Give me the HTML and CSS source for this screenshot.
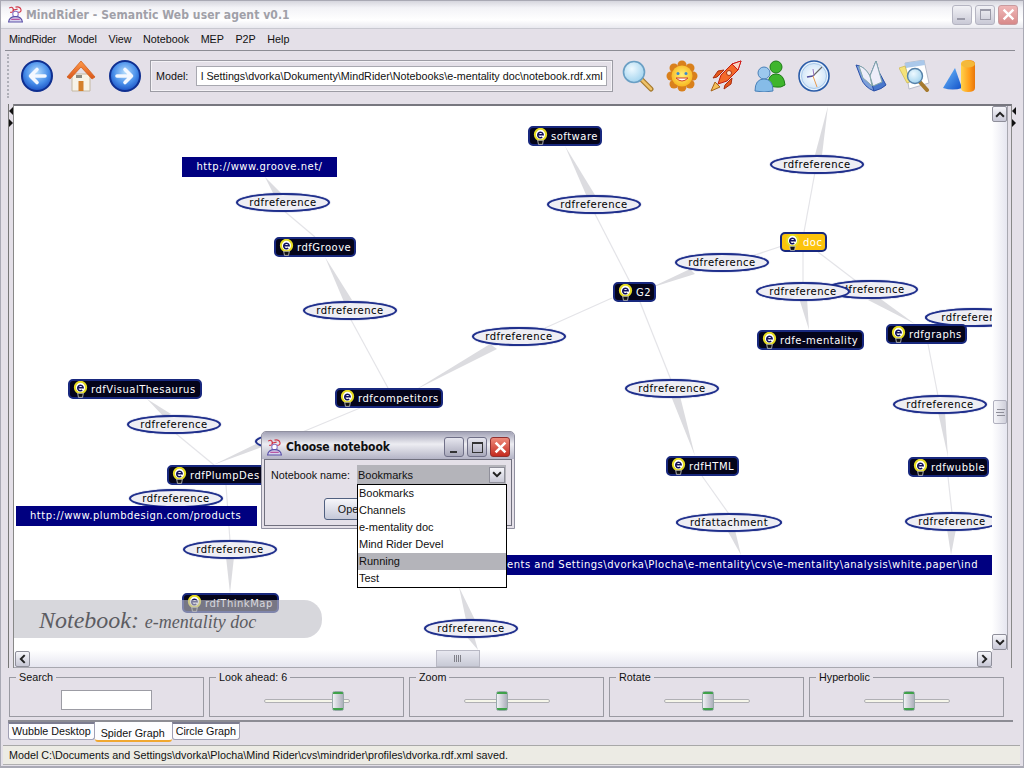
FILE: index.html
```html
<!DOCTYPE html>
<html lang="en">
<head>
<meta charset="utf-8">
<title>MindRider</title>
<link rel="stylesheet" href="styles.css">
</head>
<body>
<svg class="defs" width="0" height="0">
  <defs>
    <radialGradient id="gBlue" cx="50%" cy="38%" r="62%"><stop offset="0" stop-color="#b4dcfc"/><stop offset=".6" stop-color="#4a90ea"/><stop offset="1" stop-color="#1b52c4"/></radialGradient>
    <linearGradient id="gRoof" x1="0" y1="0" x2="0" y2="1"><stop offset="0" stop-color="#ff9a4a"/><stop offset="1" stop-color="#d9551a"/></linearGradient>
    <radialGradient id="gGlass" cx="40%" cy="35%" r="70%"><stop offset="0" stop-color="#eef9ff"/><stop offset="1" stop-color="#9fd2ee"/></radialGradient>
    <radialGradient id="gSun" cx="50%" cy="45%" r="55%"><stop offset="0" stop-color="#fff27a"/><stop offset="1" stop-color="#f8b720"/></radialGradient>
    <radialGradient id="gFace" cx="50%" cy="50%" r="55%"><stop offset="0" stop-color="#fff"/><stop offset="1" stop-color="#cfe4f8"/></radialGradient>
    <linearGradient id="gCyl" x1="0" y1="0" x2="1" y2="0"><stop offset="0" stop-color="#ffd24a"/><stop offset=".6" stop-color="#ff9d1a"/><stop offset="1" stop-color="#e8760a"/></linearGradient>
    <linearGradient id="gCone" x1="0" y1="0" x2="1" y2="1"><stop offset="0" stop-color="#6fc0ff"/><stop offset="1" stop-color="#1250c8"/></linearGradient>
    <linearGradient id="gThumb" x1="0" y1="0" x2="1" y2="0"><stop offset="0" stop-color="#f4f4f8"/><stop offset="1" stop-color="#a9acb8"/></linearGradient>
    <symbol id="bulb" viewBox="0 0 16 18">
      <circle cx="8" cy="6.800" r="6" fill="#fff" stroke="#e6dc22" stroke-width="2.200"/>
      <path d="M5 7h5.800a2.900 2.900 0 1 0-1 2.700" fill="none" stroke="#10105c" stroke-width="1.600"/>
      <path d="M5 13h6l-.8 4.400H5.800z" fill="#111" stroke="#d8d8d8" stroke-width=".8"/>
    </symbol>
    <symbol id="appicon" viewBox="0 0 16 16">
      <path d="M2 2q3-2 4 1t-3 3M8 1q4-1 5 2t-3 3M5 4l5-1" fill="none" stroke="#d23a4a" stroke-width="1.100"/>
      <circle cx="8" cy="7.500" r="2.600" fill="#fff" stroke="#8a78c8"/>
      <path d="M1.500 15c.5-4 3.500-5 6.500-5s6 1 6.500 5z" fill="#d8d4ee" stroke="#5a50a8"/>
      <path d="M4 12.500h8" stroke="#b03a90"/>
    </symbol>
    <symbol id="arrow-up" viewBox="0 0 9 6"><path d="M1 5l3.500-3.500L8 5" fill="none" stroke="#222" stroke-width="1.800"/></symbol>
    <symbol id="arrow-down" viewBox="0 0 9 6"><path d="M1 1l3.500 3.500L8 1" fill="none" stroke="#222" stroke-width="1.800"/></symbol>
    <symbol id="arrow-left" viewBox="0 0 6 9"><path d="M5 1L1.500 4.500 5 8" fill="none" stroke="#222" stroke-width="1.800"/></symbol>
    <symbol id="arrow-right" viewBox="0 0 6 9"><path d="M1 1l3.500 3.500L1 8" fill="none" stroke="#222" stroke-width="1.800"/></symbol>
    <symbol id="thumb" viewBox="0 0 12 20">
      <rect x=".5" y=".5" width="11" height="19" rx="2" fill="url(#gThumb)" stroke="#9aa"/>
      <path d="M1 3V2q0-1 1-1h8q1 0 1 1v1zM1 17v1q0 1 1 1h8q1 0 1-1v-1z" fill="#3fa24a"/>
    </symbol>
  </defs>
</svg>

<div class="window">
  <header class="titlebar">
    <svg class="title-icon"><use href="#appicon"/></svg>
    <span class="title-text">MindRider - Semantic Web user agent v0.1</span>
    <div class="win-buttons">
      <span class="wbtn"><i class="g-min"></i></span>
      <span class="wbtn"><i class="g-max"></i></span>
      <span class="wbtn wbtn-close"><svg viewBox="0 0 12 12" class="g-x"><path d="M1.500 1.500l9 9M10.500 1.500l-9 9" stroke="#fff" stroke-width="2.200"/></svg></span>
    </div>
  </header>

  <nav class="menubar">
    <span class="menu-first">MindRider</span><span>Model</span><span>View</span><span>Notebook</span><span>MEP</span><span>P2P</span><span>Help</span>
  </nav>

  <div class="toolbar">
    <div class="grip"></div>
    <div class="tools">
      <svg class="tool" viewBox="0 0 32 32"><circle cx="16" cy="16" r="15" fill="url(#gBlue)" stroke="#0f2f90" stroke-width="2"/><path d="M24 16H10M16 9.500L9.500 16l6.500 6.500" fill="none" stroke="#f4f8ff" stroke-width="3.600" stroke-linecap="round" stroke-linejoin="round"/></svg>
      <svg class="tool" viewBox="0 0 32 32"><path d="M7 14h18v17H7z" fill="#f7f3e8" stroke="#c4b8a2"/><path d="M13.500 21h5v10h-5z" fill="#d4802c"/><path d="M11 15h6v3h-6z" fill="#8a8a80"/><path d="M16 1L2 17l3 2L16 7l11 12 3-2z" fill="url(#gRoof)" stroke="#d0601c" stroke-width=".8"/></svg>
      <svg class="tool" viewBox="0 0 32 32"><circle cx="16" cy="16" r="15" fill="url(#gBlue)" stroke="#0f2f90" stroke-width="2"/><path d="M8 16h14M16 9.500l6.500 6.500-6.500 6.500" fill="none" stroke="#f4f8ff" stroke-width="3.600" stroke-linecap="round" stroke-linejoin="round"/></svg>
    </div>
    <div class="model-box">
      <label class="model-label">Model:</label>
      <div class="model-input">l Settings\dvorka\Dokumenty\MindRider\Notebooks\e-mentality doc\notebook.rdf.xml</div>
    </div>
    <div class="tools tools-a">
      <svg class="tool" viewBox="0 0 32 32"><path d="M19 19l10 10" stroke="#a67a2e" stroke-width="5" stroke-linecap="round"/><path d="M19 19l10 10" stroke="#eec268" stroke-width="2.500" stroke-linecap="round"/><circle cx="12" cy="12" r="10.500" fill="url(#gGlass)" stroke="#6a9fc4" stroke-width="1.600"/></svg>
      <svg class="tool" viewBox="0 0 32 32"><g fill="#d9801c"><circle cx="16" cy="5" r="4.500"/><circle cx="16" cy="27" r="4.500"/><circle cx="5" cy="16" r="4.500"/><circle cx="27" cy="16" r="4.500"/><circle cx="8" cy="8" r="4.500"/><circle cx="24" cy="8" r="4.500"/><circle cx="8" cy="24" r="4.500"/><circle cx="24" cy="24" r="4.500"/></g><circle cx="16" cy="16" r="10.500" fill="url(#gSun)"/><circle cx="12" cy="13.500" r="1.500" fill="#3a8ad0"/><circle cx="20" cy="13.500" r="1.500" fill="#3a8ad0"/><path d="M10 18q6 6 12 0z" fill="#fff" stroke="#d2432a"/></svg>
      <svg class="tool" viewBox="0 0 32 32"><path d="M1 31l4-9 5 5z" fill="#f3c05a" stroke="#a8641a"/><path d="M7 17l-4 1 5-7 6-1zM15 25l-1 4 7-5 1-6z" fill="#e65a1e" stroke="#a82c10"/><path d="M8 24L11 15 22 4 31 1 28 10 17 21z" fill="#f36a2a" stroke="#c01e10"/><path d="M22 4l9-3-3 9z" fill="#f8d6c4" stroke="#d01818"/><circle cx="19" cy="13" r="2.500" fill="#ffe2cc" stroke="#a83010"/></svg>
      <svg class="tool" viewBox="0 0 32 32"><circle cx="22" cy="7" r="6" fill="#3eb52c" stroke="#1e7c18"/><path d="M14 25q0-11 8-11t9 11q-4 3-9 2-5 0-8-2z" fill="#3eb52c" stroke="#1e7c18"/><circle cx="10" cy="13" r="6" fill="#9cc8ee" stroke="#4a80b8"/><path d="M1 31q0-12 9-12t9 12q-9 2-18 0z" fill="#86bce8" stroke="#4a80b8"/></svg>
      <svg class="tool" viewBox="0 0 32 32"><circle cx="16" cy="16" r="15" fill="#e6f1fb" stroke="#2a5ca8" stroke-width="1.600"/><circle cx="16" cy="16" r="12.500" fill="url(#gFace)" stroke="#a8c8ea"/><path d="M15 16L24 7" stroke="#666" stroke-width="1.100"/><path d="M15 16L9 17" stroke="#5050a0" stroke-width="1.500"/><path d="M15 9l1 7" stroke="#9878c0"/><path d="M15 16l4 11" stroke="#e89a50"/></svg>
    </div>
    <div class="tools tools-b">
      <svg class="tool" viewBox="0 0 32 32"><path d="M1 5q8 1 14 11l4 15Q9 27 6 18z" fill="#7d9fdb" stroke="#2a50a8"/><path d="M15 16L19 31Q27 29 31 25L24 12 21 1z" fill="#4a78cc" stroke="#2a50a8"/><path d="M4 6q6 1 11 10l2 10q-5-5-9-8zM15 16l6-15 6 21-9 4z" fill="#eeeefa" stroke="#8aa"/></svg>
      <svg class="tool" viewBox="0 0 32 32"><path d="M6 3l19-3 5 23-20 6z" fill="#fff" stroke="#b8bcc8"/><path d="M6 3l19-3 1 5-19 3z" fill="#aac8ea"/><path d="M0 8l6-2 5 16-3 1z" fill="#f5e27a" stroke="#c8b040" stroke-width=".6"/><path d="M20 21l8 9" stroke="#a67a2e" stroke-width="4" stroke-linecap="round"/><circle cx="16" cy="16" r="7.500" fill="url(#gGlass)" stroke="#5580a8" stroke-width="1.400"/></svg>
      <svg class="tool" viewBox="0 0 32 32"><path d="M0 28L12 8l7 20q-9 3-19 0z" fill="url(#gCone)"/><path d="M18 4q0-4 7-4t7 4v24q0 4-7 4t-7-4z" fill="url(#gCyl)"/><ellipse cx="25" cy="4" rx="7" ry="3.500" fill="#f4b93a"/></svg>
    </div>
  </div>

  <main class="workspace">
    <div class="splitter"><i class="tri-l"></i><i class="tri-r"></i></div>
    <div class="scrollpane">
      <div class="view-row">
        <div class="canvas">
          <svg class="edges" viewBox="14 106 978 544">
            <g class="wedge">
              <polygon points="828,106 815,155 822,155"/>
              <polygon points="799,298 807,298 809,330"/>
              <polygon points="878,297 868,300 915,324"/>
              <polygon points="938,412 945,412 948,457"/>
              <polygon points="947,529 956,529 951,555"/>
              <polygon points="690,269 695,274 650,288"/>
              <polygon points="490,344 497,349 415,390"/>
              <polygon points="565,146 587,197 595,195"/>
              <polygon points="671,396 680,396 695,456"/>
              <polygon points="727,530 735,530 741,555"/>
              <polygon points="265,177 274,195 281,193"/>
              <polygon points="325,257 344,302 352,300"/>
              <polygon points="147,399 164,417 171,414"/>
              <polygon points="226,557 234,557 230,593"/>
              <polygon points="459,587 466,620 475,620"/>
              <polygon points="466,636 474,636 478,650"/>
              <polygon points="213,465 260,442 262,447"/>
            </g>
            <g class="thin">
              <line x1="815" y1="172" x2="804" y2="232"/>
              <line x1="803" y1="252" x2="803" y2="283"/>
              <line x1="818" y1="252" x2="856" y2="281"/>
              <line x1="928" y1="344" x2="938" y2="396"/>
              <line x1="948" y1="477" x2="952" y2="513"/>
              <line x1="782" y1="246" x2="752" y2="256"/>
              <line x1="612" y1="298" x2="545" y2="328"/>
              <line x1="594" y1="212" x2="630" y2="282"/>
              <line x1="640" y1="302" x2="671" y2="380"/>
              <line x1="702" y1="476" x2="729" y2="514"/>
              <line x1="283" y1="210" x2="315" y2="237"/>
              <line x1="350" y1="318" x2="388" y2="388"/>
              <line x1="174" y1="432" x2="214" y2="465"/>
              <line x1="226" y1="485" x2="230" y2="541"/>
              <line x1="360" y1="408" x2="300" y2="433"/>
            </g>
          </svg>

          <div class="ell e1">rdfreference</div>
          <div class="ell e2">rdfreference</div>
          <div class="ell e3">rdfreference</div>
          <div class="ell e4">rdfreference</div>
          <div class="ell e5">rdfreference</div>
          <div class="ell e6">rdfreference</div>
          <div class="ell e7">rdfreference</div>
          <div class="ell e8">rdfreference</div>
          <div class="ell e9">rdfreference</div>
          <div class="ell e10">rdfreference</div>
          <div class="ell e11">rdfreference</div>
          <div class="ell e12">rdfreference</div>
          <div class="ell e13">rdfreference</div>
          <div class="ell e14">rdfreference</div>
          <div class="ell e15">rdfreference</div>
          <div class="ell e16">rdfreference</div>
          <div class="ell e17">rdfreference</div>
          <div class="ell e18">rdfattachment</div>

          <div class="node n1"><svg class="bulb"><use href="#bulb"/></svg>software</div>
          <div class="node n2"><svg class="bulb"><use href="#bulb"/></svg>rdfGroove</div>
          <div class="node n3"><svg class="bulb"><use href="#bulb"/></svg>G2</div>
          <div class="node node-hot n4"><svg class="bulb"><use href="#bulb"/></svg>doc</div>
          <div class="node n5"><svg class="bulb"><use href="#bulb"/></svg>rdfe-mentality</div>
          <div class="node n6"><svg class="bulb"><use href="#bulb"/></svg>rdfgraphs</div>
          <div class="node n7"><svg class="bulb"><use href="#bulb"/></svg>rdfcompetitors</div>
          <div class="node n8"><svg class="bulb"><use href="#bulb"/></svg>rdfVisualThesaurus</div>
          <div class="node n9"><svg class="bulb"><use href="#bulb"/></svg>rdfPlumpDes</div>
          <div class="node n10"><svg class="bulb"><use href="#bulb"/></svg>rdfHTML</div>
          <div class="node n11"><svg class="bulb"><use href="#bulb"/></svg>rdfwubble</div>
          <div class="node n12"><svg class="bulb"><use href="#bulb"/></svg>rdfThinkMap</div>

          <div class="url u1">http://www.groove.net/</div>
          <div class="url u2">http://www.plumbdesign.com/products</div>
          <div class="url u3">ents and Settings\dvorka\Plocha\e-mentality\cvs\e-mentality\analysis\white.paper\ind</div>

          <div class="watermark"><span class="wm-big">Notebook:</span> <span class="wm-small">e-mentality doc</span></div>

          <div class="dialog">
            <div class="dlg-title">
              <svg class="dlg-icon"><use href="#appicon"/></svg>
              <span class="dlg-text">Choose notebook</span>
              <span class="dbtn"><i class="g-min g-min-d"></i></span>
              <span class="dbtn"><i class="g-max g-max-d"></i></span>
              <span class="dbtn dbtn-close"><svg viewBox="0 0 12 12" class="g-x"><path d="M1.500 1.500l9 9M10.500 1.500l-9 9" stroke="#fff" stroke-width="2.400"/></svg></span>
            </div>
            <div class="dlg-body">
              <div class="dlg-row">
                <span class="dlg-label">Notebook name:</span>
                <div class="combo"><span>Bookmarks</span><span class="combo-btn"><svg class="ar-v"><use href="#arrow-down"/></svg></span></div>
              </div>
              <button class="open-btn" type="button">Open</button>
            </div>
          </div>

          <ul class="popup">
            <li>Bookmarks</li>
            <li>Channels</li>
            <li>e-mentality doc</li>
            <li>Mind Rider Devel</li>
            <li class="sel">Running</li>
            <li>Test</li>
          </ul>
        </div>
        <div class="vscroll">
          <span class="sbtn"><svg class="ar-v"><use href="#arrow-up"/></svg></span>
          <div class="vtrack"><span class="vthumb"></span></div>
          <span class="sbtn"><svg class="ar-v"><use href="#arrow-down"/></svg></span>
        </div>
      </div>
      <div class="hscroll">
        <span class="sbtn"><svg class="ar-h"><use href="#arrow-left"/></svg></span>
        <div class="htrack"><span class="hthumb"></span></div>
        <span class="sbtn"><svg class="ar-h"><use href="#arrow-right"/></svg></span>
      </div>
    </div>
    <div class="splitter splitter-r"><i class="tri-l"></i><i class="tri-r"></i></div>
  </main>

  <section class="controls">
    <fieldset class="group"><legend>Search</legend><div class="search-box"></div></fieldset>
    <fieldset class="group"><legend>Look ahead: 6</legend><div class="slider s-look"><svg class="sthumb"><use href="#thumb"/></svg></div></fieldset>
    <fieldset class="group"><legend>Zoom</legend><div class="slider s-zoom"><svg class="sthumb"><use href="#thumb"/></svg></div></fieldset>
    <fieldset class="group"><legend>Rotate</legend><div class="slider s-rot"><svg class="sthumb"><use href="#thumb"/></svg></div></fieldset>
    <fieldset class="group"><legend>Hyperbolic</legend><div class="slider s-hyp"><svg class="sthumb"><use href="#thumb"/></svg></div></fieldset>
  </section>

  <div class="tabs">
    <span class="tab">Wubble Desktop</span>
    <span class="tab tab-active">Spider Graph</span>
    <span class="tab">Circle Graph</span>
  </div>

  <footer class="status">Model C:\Documents and Settings\dvorka\Plocha\Mind Rider\cvs\mindrider\profiles\dvorka.rdf.xml saved.</footer>
</div>
</body>
</html>
```
FILE: styles.css
```css
* { box-sizing: border-box; }
html, body { margin: 0; height: 100%; overflow: hidden; }
body { background: #fff; font: 10.75px "Liberation Sans", Arial, sans-serif; color: #111; }
.defs { position: absolute; }

.window {
  width: 1024px; height: 768px; display: flex; flex-direction: column;
  background: #e4e0e8; border: 1px solid #a9a9b4; border-width: 1px 1px 2px 1px;
  padding: 0 2px;
}

/* Title bar */
.titlebar {
  height: 28px; flex: none; display: flex; align-items: center; padding-left: 3px; margin: 0 -2px;
  background: linear-gradient(#d6d6de 0, #f3f3f7 25%, #fff 70%, #e9e9ef 100%);
  border-bottom: 1px solid #c8c8d0;
}
.title-icon { width: 17px; height: 17px; margin: 0 2px 0 3px; }
.title-text { font: bold 12px "DejaVu Sans", sans-serif; font-stretch: condensed; letter-spacing: .08px; color: #a0a0a8; flex: 1; }
.win-buttons { display: flex; gap: 3px; margin-right: 5px; }
.wbtn {
  width: 20px; height: 20px; border: 1px solid #b5b5c2; border-radius: 3px; display: flex; align-items: center; justify-content: center;
  background: linear-gradient(#f2f2f6, #c9c9d6);
}
.wbtn-close { background: linear-gradient(#f0b8b8, #d88a8a); border-color: #c89a9e; }
.g-min { width: 8px; height: 2px; background: #9a9aa8; margin-top: 9px; margin-right: 2px; }
.g-max { width: 11px; height: 11px; border: 1px solid #9a9aa8; border-top-width: 2px; }
.g-x { width: 13px; height: 13px; }

/* Menu */
.menubar { height: 21px; flex: none; display: flex; align-items: center; padding: 0 0 2px 6px; gap: 11.500px; }
.menu-first { letter-spacing: -.2px; }

/* Toolbar */
.toolbar {
  height: 54px; flex: none; display: flex; align-items: center;
  border-top: 1px solid #8c8c94; padding: 0 0 4px 2px; margin: 0 6px 0 2px;
}
.grip { width: 2px; height: 44px; border-left: 2px dotted #b0b0b8; margin-right: 12px; }
.tools { display: flex; gap: 12px; }
.tool { width: 32px; height: 32px; flex: none; }
.model-box {
  width: 463px; height: 32px; margin-left: 9px; display: flex; align-items: center;
  border: 1px solid #9c9ca4; padding: 0 5px; box-shadow: inset 0 0 0 1px #f4f2f6;
}
.model-label { width: 40px; flex: none; }
.model-input {
  flex: 1; height: 20px; background: #fff; border: 1px solid #a8a8b0; padding: 0 4px; line-height: 18px;
  white-space: nowrap; overflow: hidden;
}
.tools-a { margin-left: 9px; }
.tools-b { margin-left: 25px; }

/* Workspace */
.workspace { flex: none; height: 564px; display: flex; margin: 0 4px 0 5px; }
.splitter { width: 6px; flex: none; position: relative; border-left: 1px solid #777; border-right: 1px solid #888; }
.splitter-r { width: 5px; border-left: 0; border-right: 0; }
.tri-l, .tri-r { position: absolute; left: 0; width: 0; height: 0; border-style: solid; border-color: transparent; }
.tri-l { top: 3px; border-width: 4px 4px 4px 0; border-right-color: #111; }
.tri-r { top: 15px; border-width: 4px 0 4px 4px; border-left-color: #111; }
.scrollpane { flex: 1; min-width: 0; display: flex; flex-direction: column; border-top: 2px solid #77777f; border-right: 1px solid #888; }
.view-row { flex: 1; min-height: 0; display: flex; padding-right: 3px; }
.canvas { position: relative; flex: 1; min-width: 0; background: #fff; overflow: hidden; }
.edges { position: absolute; inset: 0; width: 100%; height: 100%; }
.wedge polygon { fill: #dcdce0; }
.thin line { stroke: #e4e4e8; stroke-width: 1.200; }

.vscroll { width: 16px; flex: none; display: flex; flex-direction: column; background: linear-gradient(90deg, #fff, #e6e6f0); border-right: 1px solid #a8a8b0; }
.vtrack { flex: 1; position: relative; }
.vthumb {
  position: absolute; top: 278px; left: 1px; width: 14px; height: 24px; border: 1px solid #b0b0be; border-radius: 2px;
  background: linear-gradient(#8d8d98, #8d8d98) center/8px 1px no-repeat, linear-gradient(#8d8d98, #8d8d98) 3px 8px/8px 1px no-repeat, linear-gradient(#8d8d98, #8d8d98) 3px 14px/8px 1px no-repeat, linear-gradient(90deg, #f6f6fa, #cfcfda);
}
.hscroll { height: 18px; flex: none; display: flex; align-items: center; padding-left: 1px; background: linear-gradient(#fff, #e6e6f0); border-bottom: 1px solid #a8a8b0; margin-right: 19px; }
.htrack { flex: 1; height: 100%; position: relative; }
.hthumb {
  position: absolute; left: 406px; top: 0; width: 44px; height: 100%; border: 1px solid #b8b8c4;
  background: repeating-linear-gradient(90deg, #808088 0 1px, transparent 1px 2px) center/8px 7px no-repeat, linear-gradient(#e8e8f0, #c8cad6);
}
.sbtn { width: 15px; height: 16px; flex: none; display: flex; align-items: center; justify-content: center; border: 1px solid #8f8f9a; border-radius: 2px; background: linear-gradient(#f6f6fa, #c8c8d6); }
.ar-v { width: 10px; height: 7px; }
.ar-h { width: 7px; height: 10px; }

/* Graph nodes */
.ell {
  position: absolute; width: 94px; height: 19px; border: 2px solid #1f2f8c; border-radius: 50%; box-shadow: 0 0 1px #1f2f8c;
  background: #eeeef4; text-align: center; font: 10px/15px "DejaVu Sans", sans-serif; letter-spacing: .48px; color: #000; white-space: nowrap;
}
.e1 { left: 222px; top: 87px; }
.e2 { left: 533px; top: 89px; }
.e3 { left: 756px; top: 49px; }
.e4 { left: 661px; top: 147px; }
.e5 { left: 810px; top: 174px; }
.e6 { left: 742px; top: 176px; }
.e7 { left: 911px; top: 202px; width: 100px; }
.e8 { left: 289px; top: 195px; }
.e9 { left: 458px; top: 221px; }
.e10 { left: 611px; top: 273px; }
.e11 { left: 113px; top: 309px; }
.e12 { left: 879px; top: 289px; }
.e13 { left: 241px; top: 326px; }
.e14 { left: 115px; top: 383px; }
.e15 { left: 169px; top: 434px; }
.e16 { left: 891px; top: 406px; }
.e17 { left: 410px; top: 513px; }
.e18 { left: 662px; top: 407px; width: 106px; }

.node {
  position: absolute; height: 20px; display: flex; align-items: center; gap: 3px; padding-left: 3px;
  background: #04041a; border: 2px solid #18287e; border-radius: 5px; color: #fff;
  font: 10px "DejaVu Sans", sans-serif; white-space: nowrap; letter-spacing: .5px;
}
.node-hot { background: #fcc30c; }
.bulb { width: 15px; height: 17px; flex: none; }
.n1 { left: 514px; top: 20px; width: 74px; }
.n2 { left: 260px; top: 131px; width: 82px; }
.n3 { left: 599px; top: 176px; width: 43px; }
.n4 { left: 766px; top: 126px; width: 47px; }
.n5 { left: 743px; top: 224px; width: 107px; }
.n6 { left: 872px; top: 218px; width: 81px; }
.n7 { left: 321px; top: 282px; width: 108px; }
.n8 { left: 54px; top: 273px; width: 134px; }
.n9 { left: 153px; top: 359px; width: 133px; }
.n10 { left: 652px; top: 350px; width: 73px; }
.n11 { left: 894px; top: 351px; width: 81px; }
.n12 { left: 168px; top: 487px; width: 97px; }

.url {
  position: absolute; height: 20px; background: #000080; color: #fff; font: 10px/20px "DejaVu Sans", sans-serif;
  white-space: nowrap; overflow: hidden; letter-spacing: .5px;
}
.u1 { left: 168px; top: 51px; width: 155px; text-align: center; }
.u2 { left: 2px; top: 400px; width: 241px; padding-left: 14px; }
.u3 { left: 486px; top: 449px; width: 492px; padding-left: 7px; }

.watermark {
  position: absolute; left: 0; top: 494px; width: 308px; height: 38px; padding: 1px 0 0 25px; border-radius: 0 18px 18px 0;
  background: rgba(190, 190, 198, .62); font-family: "Liberation Serif", serif; font-style: italic; color: #5c5c62; line-height: 38px;
}
.wm-big { font-size: 24px; }
.wm-small { font-size: 18px; margin-left: 3px; }

/* Dialog */
.dialog {
  position: absolute; left: 247px; top: 325px; width: 254px; height: 98px; display: flex; flex-direction: column;
  border: 1px solid #9090a0; border-radius: 5px 5px 0 0; background: #e4e0e8;
}
.dlg-title {
  height: 27px; flex: none; display: flex; align-items: center; gap: 3px; padding: 3px 4px 0 4px;
  background: linear-gradient(#a2a2b6, #ededf2 45%, #b4b4c6);
  border-radius: 4px 4px 0 0;
}
.dlg-icon { width: 17px; height: 17px; flex: none; }
.dlg-text { flex: 1; font: bold 12px "DejaVu Sans", sans-serif; font-stretch: condensed; letter-spacing: -.1px; color: #111; }
.dbtn { width: 20px; height: 20px; border: 1px solid #707088; border-radius: 3px; display: flex; align-items: center; justify-content: center; background: linear-gradient(#e6e6ef, #a8a8ba); }
.dbtn-close { background: linear-gradient(#ee8a7a, #c42a20); border-color: #903030; }
.g-min-d { background: #333; width: 7px; margin: 9px 2px 0 0; }
.g-max-d { border-color: #333; }
.dlg-body { flex: 1; margin: 0 2px 2px; border: 1px solid #70707e; padding: 5px 5px 0 6px; }
.dlg-row { display: flex; align-items: center; }
.dlg-label { width: 86px; flex: none; }
.combo { flex: 1; height: 19px; display: flex; align-items: center; justify-content: space-between; padding: 0 1px; background: #b4b4ba; font-size: 11px; }
.combo-btn { width: 16px; height: 16px; border: 1px solid #8f8f9a; display: flex; align-items: center; justify-content: center; background: linear-gradient(#f6f6fa, #c8c8d6); }
.open-btn {
  margin: 14px 0 0 53px; display: block; width: 54px; height: 22px; padding: 0; border: 1px solid #506080; border-radius: 3px;
  background: linear-gradient(#f6f6fa, #c4c8d8); font: 10.750px "Liberation Sans", sans-serif; color: #111;
}
.popup { position: absolute; left: 343px; top: 378px; width: 150px; margin: 0; padding: 0; list-style: none; background: #fff; border: 1px solid #000; }
.popup li { height: 17px; line-height: 17px; padding-left: 1px; font-size: 11px; }
.popup .sel { background: #b4b4ba; }

/* Controls */
.controls { height: 50px; flex: none; display: grid; grid-template-columns: repeat(5, 195px); gap: 5px; padding-left: 1px; margin: 4px 8px 0 5px; border-bottom: 2px solid #8c8c94; align-items: start; }
.group { margin: 0; padding: 0; min-width: 0; height: 45px; border: 1px solid #9a9aa2; display: flex; align-items: center; justify-content: center; }
.group legend { margin-left: 6px; padding: 0 3px; line-height: 11px; }
.search-box { width: 91px; height: 20px; background: #fff; border: 1px solid #9c9ca4; }
.slider { width: 86px; height: 4px; border: 1px solid #b0b0b4; border-radius: 2px; background: #f6f6ea; position: relative; margin-top: 2px; }
.sthumb { position: absolute; top: -9px; width: 12px; height: 20px; }
.s-look .sthumb { left: 67px; }
.s-zoom .sthumb { left: 31px; }
.s-rot .sthumb { left: 37px; }
.s-hyp .sthumb { left: 38px; }

/* Tabs */
.tabs { height: 23px; flex: none; display: flex; align-items: flex-start; padding-left: 5px; }
.tab { height: 18px; padding: 0 3px; line-height: 15px; background: #fdfdff; border: 1px solid #a0a0b4; border-top: 2px solid #7c7c90; border-radius: 0 0 3px 3px; }
.tab-active { height: 20px; padding: 5px 7px 0 6px; line-height: 13px; border: 0; border-bottom: 2px solid #f0a830; }
.status {
  height: 20px; flex: none; background: #ecebe4; border-top: 1px solid #a8a8a8; border-bottom: 1px solid #b0b0b0;
  line-height: 18px; padding-left: 6px; margin-right: 1px;
}
```
